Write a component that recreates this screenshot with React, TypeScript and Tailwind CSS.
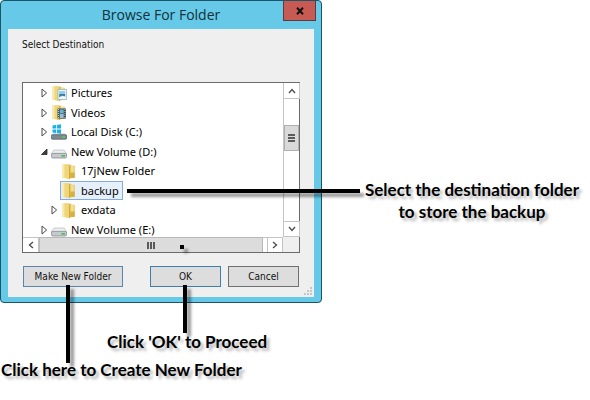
import React, { useState } from "react";

type IconKind = "pictures" | "videos" | "system" | "drive" | "folder";

type TreeItem = {
  label: string;
  icon: IconKind;
  child?: boolean;
  state: "open" | "closed" | "none";
};

const items: TreeItem[] = [
  { label: "Pictures", icon: "pictures", state: "closed" },
  { label: "Videos", icon: "videos", state: "closed" },
  { label: "Local Disk (C:)", icon: "system", state: "closed" },
  { label: "New Volume (D:)", icon: "drive", state: "open" },
  { label: "17jNew Folder", icon: "folder", child: true, state: "none" },
  { label: "backup", icon: "folder", child: true, state: "none" },
  { label: "exdata", icon: "folder", child: true, state: "closed" },
  { label: "New Volume (E:)", icon: "drive", state: "closed" },
];

const FolderShape = () => (
  <>
    <path d="M4.5 1.5h5l1 1.2h3.2v12H4.5z" fill="#e2c25a" />
    <path d="M6 3h6.8v10.5H6z" fill="#f3df8e" />
    <path d="M1 1.8l4.6-.8L8 3v13.2L1 14.4z" fill="#efd678" />
    <path d="M1 1.8l2.4-.4v13.6L1 14.4z" fill="#f8eab0" />
    <path d="M8 3.4l1.4-.8v12.6L8 16.2z" fill="#cfa83a" />
    <path d="M9.4 9.5h4.3v5.2l-4.3.5z" fill="#d8b040" />
  </>
);

const DriveShape = () => (
  <>
    <path d="M3 7h10l3 4H0z" fill="#eceeef" />
    <path d="M0 11L3 7h10l3 4" fill="none" stroke="#b4b8bb" strokeWidth=".7" />
    <rect x=".4" y="10.4" width="15.2" height="4.6" rx="1.6" fill="#c6cacc" stroke="#868b8f" strokeWidth=".8" />
    <rect x="10.5" y="12" width="3.5" height="1.6" fill="#46c04a" />
  </>
);

const ItemIcon = ({ kind }: { kind: IconKind }) => (
  <svg viewBox="0 0 16 17" className="h-[17px] w-4 shrink-0" aria-hidden="true">
    {kind === "folder" && <FolderShape />}
    {kind === "pictures" && (
      <>
        <FolderShape />
        <rect x="7" y="4.5" width="8.5" height="10" fill="#eef6fa" stroke="#9ab7c6" strokeWidth=".8" />
        <path d="M8.2 6h6v3h-6z" fill="#8fd0ee" />
        <path d="M8.2 9h6v2.5l-3-.8-3 1.5z" fill="#3f7f9c" />
      </>
    )}
    {kind === "videos" && (
      <>
        <FolderShape />
        <rect x="6.5" y="4.5" width="8.5" height="10" fill="#39505f" />
        <path d="M8.7 5.5h4v4h-4z" fill="#6cb0d6" />
        <path d="M8.7 10h4v4h-4z" fill="#9cbccc" />
        <path d="M7.5 5v9.5M14 5v9.5" stroke="#e8eef1" strokeWidth=".8" strokeDasharray="1 1" />
      </>
    )}
    {kind === "drive" && <DriveShape />}
    {kind === "system" && (
      <>
        <path d="M2 9.5h12l2 2H0z" fill="#c3cad0" />
        <rect x=".4" y="10.8" width="15.2" height="4.4" rx="1" fill="#7d8a92" stroke="#56636b" strokeWidth=".8" />
        <rect x="11" y="12.4" width="3" height="1.4" fill="#55d33f" />
        <path d="M1.5 1.5L5 1v3.6H1.5zM5.8.9L10 .3v4.3H5.8zM1.5 5.4H5V9l-3.5-.5zM5.8 5.4H10v4.3l-4.2-.6z" fill="#1cb0ea" />
      </>
    )}
  </svg>
);

const Chevron = ({ d }: { d: string }) => (
  <svg viewBox="0 0 8 8" className="size-2" aria-hidden="true">
    <path d={d} fill="none" stroke="#505050" strokeWidth="1.4" />
  </svg>
);

const ResizeGrip = () => (
  <svg viewBox="0 0 8 8" className="absolute right-[2px] bottom-[2px] size-2" aria-hidden="true">
    <path d="M6 0h2v2H6zM3 3h2v2H3zM6 3h2v2H6zM0 6h2v2H0zM3 6h2v2H3zM6 6h2v2H6z" fill="#c6c6c6" />
  </svg>
);

const scrollButton = "flex size-4 shrink-0 items-center justify-center border border-[#c4c4c4] bg-white";
const dialogButton = "relative h-[21px] border bg-[#dddddd] text-[10px] leading-4 text-[#111111]";
const leader = "pointer-events-none absolute z-10 bg-black shadow-[4px_4px_3px_rgba(0,0,0,0.4)]";
const note = "text-[17px] leading-[22px] font-bold whitespace-nowrap text-black [text-shadow:3px_3px_3px_rgba(0,0,0,0.3)]";

const FolderTree = () => {
  const [selected, setSelected] = useState("backup");

  return (
    <div className="border border-[#6b6b6b] bg-white">
      <div className="flex h-[154px]">
        <ul className="min-w-0 flex-1 overflow-hidden font-['Noto_Sans','Open_Sans',sans-serif] text-[11px] leading-4">
          {items.map((item) => (
            <li
              key={item.label}
              className={`flex items-center odd:h-5 even:h-[19px] ${item.child ? "pl-[25px]" : "pl-[15px]"}`}
            >
              <span className="flex w-3 shrink-0 justify-center">
                {item.state !== "none" && (
                  <button type="button" aria-label={`Toggle ${item.label}`}>
                    <svg viewBox="0 0 8 10" className="h-[10px] w-2">
                      {item.state === "open" ? (
                        <path d="M7 2v5.5H1.5z" fill="#404040" stroke="#262626" strokeWidth=".8" />
                      ) : (
                        <path d="M2 1v8L6.6 5z" fill="#fff" stroke="#4a4a4a" strokeWidth="1" />
                      )}
                    </svg>
                  </button>
                )}
              </span>
              <button
                type="button"
                onClick={() => setSelected(item.label)}
                className={`flex h-full items-center gap-1 border pr-[3px] whitespace-nowrap ${
                  selected === item.label ? "border-[#84acdd] bg-[#e6f0fb]" : "border-transparent"
                }`}
              >
                <ItemIcon kind={item.icon} />
                {item.label}
              </button>
            </li>
          ))}
        </ul>
        <div className="flex w-4 flex-col border-l border-[#c4c4c4]">
          <button type="button" aria-label="Scroll up" className={`${scrollButton} border-t-0 border-l-0`}>
            <Chevron d="M1 6l3-3.5L7 6" />
          </button>
          <div className="flex-[26]" />
          <div className="flex h-[26px] flex-col items-center justify-center gap-px border border-[#b0b0b0] bg-[#d9d9d9]">
            <span className="h-[2px] w-[7px] bg-[#5a5a5a]" />
            <span className="h-[2px] w-[7px] bg-[#5a5a5a]" />
            <span className="h-[2px] w-[7px] bg-[#5a5a5a]" />
          </div>
          <div className="flex-[70]" />
          <button type="button" aria-label="Scroll down" className={`${scrollButton} border-l-0`}>
            <Chevron d="M1 2l3 3.5L7 2" />
          </button>
        </div>
      </div>
      <div className="flex h-[15px] bg-[#efefef]">
        <button type="button" aria-label="Scroll left" className="flex w-4 items-center justify-center border-t border-r border-[#c4c4c4] bg-white">
          <Chevron d="M6 1L2.5 4L6 7" />
        </button>
        <div className="relative flex flex-1 items-center justify-center gap-px border border-b-0 border-[#b8b8b8] bg-[#dcdcdc]">
          <span className="h-[7px] w-[2px] bg-[#5a5a5a]" />
          <span className="h-[7px] w-[2px] bg-[#5a5a5a]" />
          <span className="h-[7px] w-[2px] bg-[#5a5a5a]" />
          <span className={`${leader} top-[7px] left-[140px] size-1`} />
        </div>
        <div className="w-1 border-t border-[#c4c4c4] bg-white" />
        <button type="button" aria-label="Scroll right" className="flex w-4 items-center justify-center border-x border-t border-[#c4c4c4] bg-white">
          <Chevron d="M2 1l3.5 3L2 7" />
        </button>
        <div className="w-4" />
      </div>
    </div>
  );
};

const BrowseDialog = () => (
  <section className="rounded-[4px] border border-[#1c5567] bg-[#65c9e7] px-[7px] pb-[5px]" aria-labelledby="dialog-title">
    <header className="relative flex h-7 items-center justify-center">
      <h1 id="dialog-title" className="font-['Open_Sans','Noto_Sans',sans-serif] text-[14px] leading-5 text-[#12303a]">
        Browse For Folder
      </h1>
      <button
        type="button"
        aria-label="Close"
        className="absolute top-0 -right-0.5 flex h-5 w-[33px] items-center justify-center border border-t-0 border-[#5b3a40] bg-[#c75b54]"
      >
        <svg viewBox="0 0 8 8" className="size-2">
          <path d="M1 .8l6 6.4M7 .8L1 7.2" stroke="#111" strokeWidth="2" />
        </svg>
      </button>
    </header>
    <div className="relative bg-[#efefef] px-[14px] pt-2 pb-[10px]">
      <p className="mb-[29px] text-[10px] leading-4 text-[#111111]">Select Destination</p>
      <FolderTree />
      <div className="mt-[13px] flex gap-[7px] px-px">
        <button type="button" className={`${dialogButton} mr-auto w-[100px] border-[#5a86ad]`}>
          Make New Folder
          <span className={`${leader} top-[18px] left-[42px] h-[78px] w-1`} />
        </button>
        <button type="button" className={`${dialogButton} w-[71px] border-[#3c7fb1]`}>
          OK
          <span className={`${leader} top-[18px] left-8 h-[48px] w-1`} />
        </button>
        <button type="button" className={`${dialogButton} w-[71px] border-[#707070]`}>
          Cancel
        </button>
      </div>
      <ResizeGrip />
    </div>
  </section>
);

const App = () => {
  return (
    <main className="min-h-screen bg-white font-['DejaVu_Sans_Condensed','Noto_Sans',sans-serif]">
      <div className="flex">
        <div className="min-w-0 flex-1">
          <BrowseDialog />
        </div>
        <aside className="w-[268px] shrink-0 pt-[179px] pr-[9px] pl-[41px] font-['Lato',sans-serif]">
          <p className={`${note} relative text-center`}>
            <span className={`${leader} top-[10px] right-full mr-[3px] h-1 w-[233px]`} />
            Select the destination folder
            <br />
            to store the backup
          </p>
        </aside>
      </div>
      <div className="flex flex-col gap-[6px] pt-7 pl-px font-['Lato',sans-serif]">
        <p className={`${note} pl-[106px]`}>Click 'OK' to Proceed</p>
        <p className={note}>Click here to Create New Folder</p>
      </div>
    </main>
  );
};

export default App;
